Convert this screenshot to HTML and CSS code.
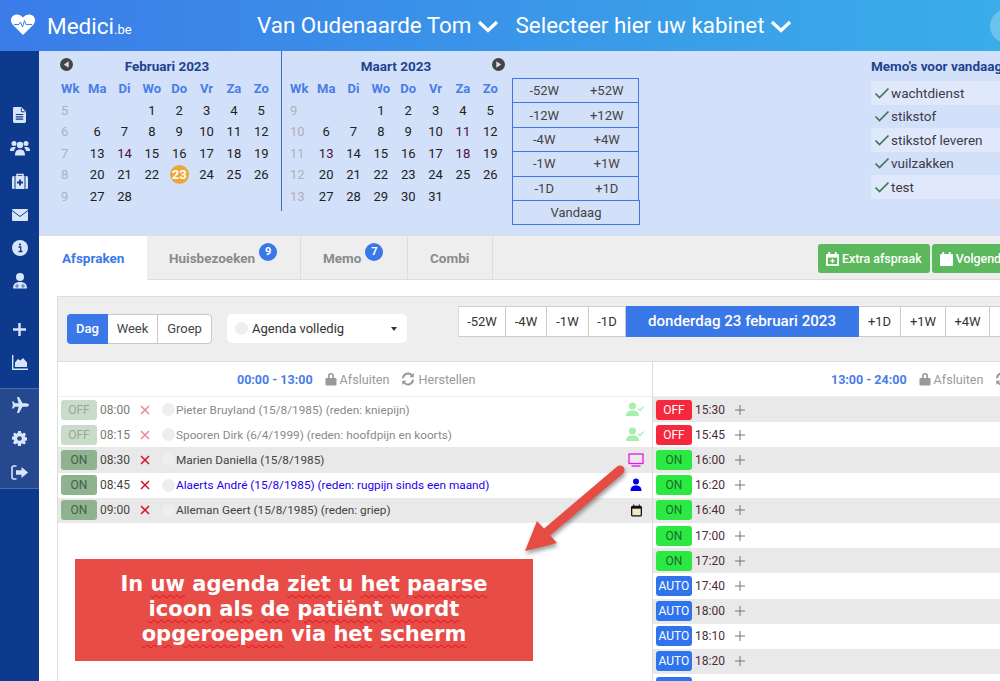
FILE: index.html
```html
<!DOCTYPE html>
<html lang="nl">
<head>
    <meta charset="UTF-8">
    <meta name="viewport" content="width=device-width, initial-scale=1.0">
    <title>Medici.be agenda</title>
    <link rel="stylesheet" href="styles.css">
</head>
<body>

    <svg class="defs" width="0" height="0">
        <symbol id="i-check" viewBox="0 0 16 16"><path d="M1.500 8.500l4 4L14.500 3.500" fill="none" stroke="currentColor" stroke-width="1.700"/></symbol>
        <symbol id="i-chevron" viewBox="0 0 22 14"><path d="M2 3l9 8.500L20 3" fill="none" stroke="currentColor" stroke-width="3.200"/></symbol>
        <symbol id="i-cross" viewBox="0 0 10 10"><path d="M1 1l8 8M9 1l-8 8" fill="none" stroke="currentColor" stroke-width="1.500"/></symbol>
        <symbol id="i-plus" viewBox="0 0 10 10"><path d="M5 0v10M0 5h10" fill="none" stroke="currentColor" stroke-width="1"/></symbol>
        <symbol id="i-lock" viewBox="0 0 12 14"><path d="M3 6V4a3 3 0 0 1 6 0v2H7.400V4a1.400 1.400 0 0 0-2.800 0v2z" fill="currentColor"/><rect x=".5" y="6" width="11" height="7.500" rx="1.200" fill="currentColor"/></symbol>
        <symbol id="i-refresh" viewBox="0 0 14 14"><path d="M2 6.200A5 5 0 0 1 11 3.500M12 7.800A5 5 0 0 1 3 10.500" fill="none" stroke="currentColor" stroke-width="2"/><path d="M12.800 1v4.300H8.500zM1.200 13V8.700h4.300z" fill="currentColor"/></symbol>
        <symbol id="i-usercheck" viewBox="0 0 18 15"><circle cx="6.500" cy="4" r="3.500" fill="currentColor"/><path d="M0 14c0-4 2.500-5.500 6.500-5.500S13 10 13 14z" fill="currentColor"/><path d="M12 6.500l2 2 3.500-4" fill="none" stroke="currentColor" stroke-width="1.300"/></symbol>
    </svg>

    <header class="topbar">
        <svg class="logo-heart" viewBox="0 0 24 21" width="24" height="21">
            <path d="M12 21L2 11C-1 8-.5 3.500 2.500 1.500 5.500-.5 9.500.5 12 3.500 14.500.5 18.500-.5 21.500 1.500 24.500 3.500 25 8 22 11z" fill="#fff"/>
            <path d="M3 10.500h5l1.500-2.500 2 5 2-6.500 1.500 4h6" fill="none" stroke="#3b7fe8" stroke-width="1"/>
        </svg>
        <div class="logo-text">Medici<small>.be</small></div>
        <div class="top-select">Van Oudenaarde Tom<svg width="22" height="14"><use href="#i-chevron"/></svg></div>
        <div class="top-select">Selecteer hier uw kabinet<svg width="22" height="14"><use href="#i-chevron"/></svg></div>
        <div class="avatar"></div>
    </header>

    <div class="shell">
        <nav class="sidebar">
            <div class="side-group">
                <a class="side-icon"><svg viewBox="0 0 14 17" width="13" height="16"><path d="M1.500 0H9l5 5v10.500a1.500 1.500 0 0 1-1.500 1.500h-11A1.500 1.500 0 0 1 0 15.500v-14A1.500 1.500 0 0 1 1.500 0z" fill="currentColor"/><path d="M3 8h8M3 10.500h8M3 13h8" stroke="#0d3a8c" stroke-width="1.200"/><path d="M9 1v4h4" fill="none" stroke="#0d3a8c"/></svg></a>
                <a class="side-icon"><svg viewBox="0 0 20 16" width="20" height="16" fill="currentColor"><circle cx="4" cy="3.500" r="2.500"/><circle cx="16" cy="3.500" r="2.500"/><circle cx="10" cy="5" r="3.200"/><path d="M0 10.500C0 8 1.500 7 4 7c1 0 1.500.3 2 .7C4.700 8.500 4 9.800 4 11H0zM20 10.500C20 8 18.500 7 16 7c-1 0-1.500.3-2 .7 1.300.8 2 2.100 2 3.300h4zM5 15.500c0-4 1.500-6 5-6s5 2 5 6z"/></svg></a>
                <a class="side-icon"><svg viewBox="0 0 16 16" width="16" height="16"><path d="M5 3V1.500h6V3" fill="none" stroke="currentColor" stroke-width="1.500"/><rect x="0" y="3" width="16" height="13" rx="1.500" fill="currentColor"/><path d="M3 3v13M13 3v13" stroke="#0d3a8c"/><path d="M8 6.500v6M5 9.500h6" stroke="#0d3a8c" stroke-width="1.800"/></svg></a>
                <a class="side-icon"><svg viewBox="0 0 16 12" width="16" height="12"><rect width="16" height="12" rx="1" fill="currentColor"/><path d="M0 1.500L8 7.500l8-6" fill="none" stroke="#0d3a8c"/></svg></a>
                <a class="side-icon"><svg viewBox="0 0 16 16" width="16" height="16"><circle cx="8" cy="8" r="8" fill="currentColor"/><path d="M6.500 7h2.200v4.500M6.500 11.500h4" fill="none" stroke="#0d3a8c" stroke-width="1.300"/><circle cx="8" cy="4.500" r="1.100" fill="#0d3a8c"/></svg></a>
                <a class="side-icon"><svg viewBox="0 0 14 16" width="14" height="16"><circle cx="7" cy="4" r="4" fill="currentColor"/><path d="M0 15.500c0-4.500 2.500-6.500 7-6.500s7 2 7 6.500z" fill="currentColor"/><circle cx="4" cy="13" r="1.200" fill="none" stroke="#0d3a8c" stroke-width=".7"/><circle cx="10" cy="13" r="1.200" fill="none" stroke="#0d3a8c" stroke-width=".7"/></svg></a>
            </div>
            <div class="side-group second">
                <a class="side-icon"><svg viewBox="0 0 14 14" width="13" height="13"><path d="M7 0v14M0 7h14" stroke="currentColor" stroke-width="2.600"/></svg></a>
                <a class="side-icon"><svg viewBox="0 0 16 15" width="16" height="15"><path d="M.7 0v14.300H16" fill="none" stroke="currentColor" stroke-width="1.400"/><path d="M3 12V7.500L6 4l2.500 1.500L11 3l4 4.500V12z" fill="currentColor"/></svg></a>
            </div>
            <div class="side-extra">
                <a class="side-icon"><svg viewBox="0 0 18 16" width="18" height="16"><path d="M18 8c0 1-1.500 1.800-3 1.800h-3.500L8 16H6l1.700-6.200H4L2.500 11.500H1L2 8 1 4.500h1.500L4 6.200h3.700L6 0h2l3.500 6.200H15c1.500 0 3 .8 3 1.800z" fill="currentColor"/></svg></a>
                <a class="side-icon"><svg viewBox="0 0 16 16" width="15" height="15"><path d="M6.500 0h3l.4 2.200 1.300.6L13 1.500 15 3.600l-1.300 1.800.5 1.300 1.800.3v3l-1.800.4-.5 1.300L15 12.400 13 14.500l-1.800-1.300-1.300.5L9.500 16h-3l-.4-2.300-1.300-.5L3 14.500 1 12.400l1.300-1.800-.5-1.300L0 9V6l1.800-.3.500-1.300L1 3.600 3 1.500l1.800 1.300 1.300-.6z" fill="currentColor"/><circle cx="8" cy="8" r="2.500" fill="#26488f"/></svg></a>
                <a class="side-icon"><svg viewBox="0 0 17 15" width="17" height="15"><path d="M5.500 1H3a2 2 0 0 0-2 2v9a2 2 0 0 0 2 2h2.500" fill="none" stroke="currentColor" stroke-width="1.600"/><path d="M17 7.500L10.500 2v3.300H5v4.400h5.500V13z" fill="currentColor"/></svg></a>
            </div>
        </nav>

        <div class="content">
            <section class="panel">
                <div class="cal first">
                    <div class="cal-title">
                        <span class="cal-arrow"><svg viewBox="0 0 12 12" width="13" height="13"><circle cx="6" cy="6" r="6" fill="#444"/><path d="M8 3v6L3.500 6z" fill="#ddd"/></svg></span>
                        <span>Februari 2023</span>
                        <span></span>
                    </div>
                    <div class="cal-grid">
                        <b>Wk</b><b>Ma</b><b>Di</b><b>Wo</b><b>Do</b><b>Vr</b><b>Za</b><b>Zo</b>
                        <i>5</i><span></span><span></span><span>1</span><span>2</span><span>3</span><span>4</span><span>5</span>
                        <i>6</i><span>6</span><span>7</span><span>8</span><span>9</span><span>10</span><span>11</span><span>12</span>
                        <i>7</i><span>13</span><span class="plum">14</span><span>15</span><span>16</span><span>17</span><span>18</span><span>19</span>
                        <i>8</i><span>20</span><span>21</span><span>22</span><span class="today"><em>23</em></span><span>24</span><span>25</span><span>26</span>
                        <i>9</i><span>27</span><span>28</span><span></span><span></span><span></span><span></span><span></span>
                    </div>
                </div>
                <div class="cal">
                    <div class="cal-title">
                        <span></span>
                        <span>Maart 2023</span>
                        <span class="cal-arrow next"><svg viewBox="0 0 12 12" width="13" height="13"><circle cx="6" cy="6" r="6" fill="#444"/><path d="M4 3v6l4.500-3z" fill="#ddd"/></svg></span>
                    </div>
                    <div class="cal-grid">
                        <b>Wk</b><b>Ma</b><b>Di</b><b>Wo</b><b>Do</b><b>Vr</b><b>Za</b><b>Zo</b>
                        <i>9</i><span></span><span></span><span>1</span><span>2</span><span>3</span><span>4</span><span>5</span>
                        <i>10</i><span>6</span><span>7</span><span>8</span><span>9</span><span>10</span><span class="plum">11</span><span>12</span>
                        <i>11</i><span class="plum">13</span><span>14</span><span>15</span><span>16</span><span>17</span><span class="plum">18</span><span>19</span>
                        <i>12</i><span>20</span><span>21</span><span>22</span><span>23</span><span>24</span><span>25</span><span>26</span>
                        <i>13</i><span>27</span><span>28</span><span>29</span><span>30</span><span>31</span><span></span><span></span>
                    </div>
                </div>
                <div class="jump">
                    <div class="jump-row"><span>-52W</span><span>+52W</span></div>
                    <div class="jump-row"><span>-12W</span><span>+12W</span></div>
                    <div class="jump-row"><span>-4W</span><span>+4W</span></div>
                    <div class="jump-row"><span>-1W</span><span>+1W</span></div>
                    <div class="jump-row"><span>-1D</span><span>+1D</span></div>
                    <div class="jump-today">Vandaag</div>
                </div>
                <div class="memos">
                    <h4>Memo's voor vandaag</h4>
                    <div class="memo odd"><svg width="16" height="16"><use href="#i-check"/></svg>wachtdienst</div>
                    <div class="memo"><svg width="16" height="16"><use href="#i-check"/></svg>stikstof</div>
                    <div class="memo odd"><svg width="16" height="16"><use href="#i-check"/></svg>stikstof leveren</div>
                    <div class="memo"><svg width="16" height="16"><use href="#i-check"/></svg>vuilzakken</div>
                    <div class="memo odd"><svg width="16" height="16"><use href="#i-check"/></svg>test</div>
                </div>
            </section>

            <div class="tabs">
                <a class="tab active">Afspraken</a>
                <a class="tab huis">Huisbezoeken<span class="count">9</span></a>
                <a class="tab memo-tab">Memo<span class="count">7</span></a>
                <a class="tab combi">Combi</a>
                <button class="green first"><svg viewBox="0 0 14 15" width="13" height="14"><path d="M3.500 0v3M10.500 0v3" stroke="currentColor" stroke-width="2"/><path d="M0 3.500a1.500 1.500 0 0 1 1.500-1.500h11A1.500 1.500 0 0 1 14 3.500V14a1 1 0 0 1-1 1H1a1 1 0 0 1-1-1z" fill="currentColor"/><rect x="2" y="6" width="10" height="7" fill="#5cb85c"/><path d="M7 7.200v4.600M4.700 9.500h4.600" stroke="#fff" stroke-width="1.500"/></svg>Extra afspraak</button>
                <button class="green"><svg viewBox="0 0 14 15" width="13" height="14"><path d="M3.500 0v3M10.500 0v3" stroke="currentColor" stroke-width="2"/><path d="M0 3.500a1.500 1.500 0 0 1 1.500-1.500h11A1.500 1.500 0 0 1 14 3.500V14a1 1 0 0 1-1 1H1a1 1 0 0 1-1-1z" fill="currentColor"/></svg>Volgende afspraak</button>
            </div>

            <main class="main">
                <div class="agenda">
                    <div class="toolbar">
                        <div class="view-switch">
                            <a class="active">Dag</a><a class="week">Week</a><a class="groep">Groep</a>
                        </div>
                        <div class="agenda-select"><span class="dot"></span>Agenda volledig<span class="caret"></span></div>
                        <div class="date-nav">
                            <a class="w48">-52W</a><a class="w40">-4W</a><a class="w41">-1W</a><a class="w36">-1D</a><a class="date">donderdag 23 februari 2023</a><a class="w41">+1D</a><a class="w44">+1W</a><a class="w43">+4W</a><a class="w60">+52W</a>
                        </div>
                    </div>
                    <div class="columns">
                        <div class="col left">
                            <div class="col-head">
                                <strong>00:00 - 13:00</strong>
                                <span><svg width="12" height="14"><use href="#i-lock"/></svg>Afsluiten</span>
                                <span><svg width="14" height="14"><use href="#i-refresh"/></svg>Herstellen</span>
                            </div>
                            <div class="row faded">
                                <span class="badge off-dim">OFF</span><span class="time">08:00</span><svg class="cross" width="10" height="10"><use href="#i-cross"/></svg><span class="dot"></span>
                                <span class="who">Pieter Bruyland (15/8/1985) (reden: kniepijn)</span>
                                <svg class="state check" width="18" height="15"><use href="#i-usercheck"/></svg>
                            </div>
                            <div class="row faded">
                                <span class="badge off-dim">OFF</span><span class="time">08:15</span><svg class="cross" width="10" height="10"><use href="#i-cross"/></svg><span class="dot"></span>
                                <span class="who">Spooren Dirk (6/4/1999) (reden: hoofdpijn en koorts)</span>
                                <svg class="state check" width="18" height="15"><use href="#i-usercheck"/></svg>
                            </div>
                            <div class="row grey">
                                <span class="badge on-dim">ON</span><span class="time">08:30</span><svg class="cross" width="10" height="10"><use href="#i-cross"/></svg><span class="dot"></span>
                                <span class="who">Marien Daniella (15/8/1985)</span>
                                <svg class="state screen" viewBox="0 0 16 14" width="16" height="14"><rect x="1" y="1" width="14" height="9.500" fill="none" stroke="currentColor" stroke-width="1.300"/><path d="M3.500 13h9" stroke="currentColor" stroke-width="1.300"/></svg>
                            </div>
                            <div class="row called">
                                <span class="badge on-dim">ON</span><span class="time">08:45</span><svg class="cross" width="10" height="10"><use href="#i-cross"/></svg><span class="dot"></span>
                                <span class="who">Alaerts André (15/8/1985) (reden: rugpijn sinds een maand)</span>
                                <svg class="state person" viewBox="0 0 12 14" width="12" height="14"><circle cx="6" cy="3.500" r="3" fill="currentColor"/><path d="M.5 13c0-4 2-5.500 5.500-5.500s5.500 1.500 5.500 5.500z" fill="currentColor"/></svg>
                            </div>
                            <div class="row grey">
                                <span class="badge on-dim">ON</span><span class="time">09:00</span><svg class="cross" width="10" height="10"><use href="#i-cross"/></svg><span class="dot"></span>
                                <span class="who">Alleman Geert (15/8/1985) (reden: griep)</span>
                                <svg class="state cal-icon" viewBox="0 0 12 13" width="11" height="13"><path d="M3 0v2.500M9 0v2.500" stroke="currentColor" stroke-width="1.200"/><rect x=".7" y="2" width="10.600" height="10.300" rx="1" fill="#f3e6c8" stroke="currentColor" stroke-width="1.400"/><path d="M1 3.500h10" stroke="currentColor" stroke-width="2"/></svg>
                            </div>
                        </div>
                        <div class="col right">
                            <div class="col-head">
                                <strong>13:00 - 24:00</strong>
                                <span><svg width="12" height="14"><use href="#i-lock"/></svg>Afsluiten</span>
                                <span><svg width="14" height="14"><use href="#i-refresh"/></svg>Herstellen</span>
                            </div>
                            <div class="row grey"><span class="badge off">OFF</span><span class="time">15:30</span><svg class="plus" width="10" height="10"><use href="#i-plus"/></svg></div>
                            <div class="row"><span class="badge off">OFF</span><span class="time">15:45</span><svg class="plus" width="10" height="10"><use href="#i-plus"/></svg></div>
                            <div class="row grey"><span class="badge on">ON</span><span class="time">16:00</span><svg class="plus" width="10" height="10"><use href="#i-plus"/></svg></div>
                            <div class="row"><span class="badge on">ON</span><span class="time">16:20</span><svg class="plus" width="10" height="10"><use href="#i-plus"/></svg></div>
                            <div class="row grey"><span class="badge on">ON</span><span class="time">16:40</span><svg class="plus" width="10" height="10"><use href="#i-plus"/></svg></div>
                            <div class="row"><span class="badge on">ON</span><span class="time">17:00</span><svg class="plus" width="10" height="10"><use href="#i-plus"/></svg></div>
                            <div class="row grey"><span class="badge on">ON</span><span class="time">17:20</span><svg class="plus" width="10" height="10"><use href="#i-plus"/></svg></div>
                            <div class="row"><span class="badge auto">AUTO</span><span class="time">17:40</span><svg class="plus" width="10" height="10"><use href="#i-plus"/></svg></div>
                            <div class="row grey"><span class="badge auto">AUTO</span><span class="time">18:00</span><svg class="plus" width="10" height="10"><use href="#i-plus"/></svg></div>
                            <div class="row"><span class="badge auto">AUTO</span><span class="time">18:10</span><svg class="plus" width="10" height="10"><use href="#i-plus"/></svg></div>
                            <div class="row grey"><span class="badge auto">AUTO</span><span class="time">18:20</span><svg class="plus" width="10" height="10"><use href="#i-plus"/></svg></div>
                            <div class="row"><span class="badge auto"></span></div>
                        </div>
                    </div>
                </div>
            </main>
        </div>
    </div>

    <!-- annotation on top of the screenshot -->
    <svg class="arrow" viewBox="0 0 130 100" width="130" height="100">
        <path d="M106 9L33 71" stroke="#e74c44" stroke-width="9" stroke-linecap="round"/>
        <path d="M11 90L23 60 43 82z" fill="#e74c44"/>
    </svg>
    <div class="callout">
        In <u>uw</u> agenda <u>ziet</u> u <u>het</u> <u>paarse</u><br>
        <u>icoon</u> <u>als</u> <u>de</u> <u>patiënt</u> <u>wordt</u><br>
        <u>opgeroepen</u> via <u>het</u> <u>scherm</u>
    </div>

</body>
</html>
```

FILE: styles.css
```css
* {
    box-sizing: border-box;
}

html, body {
    margin: 0;
    height: 681px;
    overflow: hidden;
}

body {
    position: relative;
    font-family: Roboto, "Liberation Sans", sans-serif;
    font-size: 12px;
    color: #333;
    background-color: white;
}

.defs {
    position: absolute;
}

/* top bar */
.topbar {
    height: 51px;
    display: flex;
    align-items: center;
    padding-left: 11px;
    color: white;
    background: linear-gradient(90deg, #3b7ce8, #39aee9);
}

.logo-heart {
    flex-shrink: 0;
    margin-bottom: 2px;
}

.logo-text {
    flex-shrink: 0;
    margin-left: 12px;
    width: 210px;
    font-size: 22.5px;
    font-weight: 400;
}

.logo-text small {
    font-size: 13px;
    font-weight: 400;
}

.top-select {
    display: flex;
    flex-shrink: 0;
    align-items: center;
    gap: 5px;
    padding-bottom: 2px;
    font-size: 22.4px;
    margin-right: 17px;
    white-space: pre;
}

.top-select svg {
    margin-top: 3px;
}

.avatar {
    width: 34px;
    height: 34px;
    flex-shrink: 0;
    margin-left: auto;
    margin-right: -24px;
    border-radius: 50%;
    background-color: rgba(255, 255, 255, 0.25);
}

/* sidebar */
.shell {
    display: flex;
    height: 630px;
}

.sidebar {
    width: 39px;
    flex-shrink: 0;
    padding-top: 47px;
    color: #d8e5fb;
    background-color: #0d3a8c;
}

.side-group.second {
    margin-top: 15px;
    height: 75px;
}

.side-extra {
    background-color: #26488f;
    border-top: 1px solid #4d6ca8;
    border-bottom: 1px solid #4d6ca8;
    height: 101px;
}

.side-icon {
    display: flex;
    height: 33.3px;
    align-items: center;
    justify-content: center;
}

/* calendars panel */
.content {
    width: 961px;
    overflow: hidden;
}

.panel {
    height: 185px;
    display: flex;
    align-items: flex-start;
    padding-left: 18px;
    background-color: #d2e0f9;
    border-bottom: 1px solid #dcdcdc;
}

.cal {
    width: 225px;
    flex-shrink: 0;
    padding-left: 4px;
    height: 160px;
}

.cal.first {
    width: 225px;
    padding-left: 0;
    border-right: 1px solid #3b6fc9;
}

.cal-title {
    display: grid;
    grid-template-columns: 1fr auto 1fr;
    width: 220px;
    height: 27px;
    padding-top: 7px;
    line-height: 16px;
    font-size: 13.5px;
    font-weight: 700;
    color: #1f4390;
}

.cal-arrow {
    padding-left: 3px;
}

.cal-arrow.next {
    justify-self: end;
    padding: 0 1px 0 0;
}

.cal-grid {
    display: grid;
    width: 220px;
    grid-template-columns: 26.5px repeat(7, 27.35px);
    grid-auto-rows: 21.5px;
    align-items: center;
    text-align: center;
    font-size: 13px;
    color: #222;
}

.cal-grid b {
    color: #4a7de8;
    font-weight: 700;
}

.cal-grid i {
    font-style: normal;
    color: #b0b0b8;
    text-align: left;
    padding-left: 4px;
}

.cal-grid .plum {
    color: #4a1040;
}

.today em {
    display: block;
    width: 19px;
    height: 19px;
    margin: 0 auto;
    line-height: 19px;
    font-style: normal;
    font-weight: 700;
    color: white;
    border-radius: 50%;
    background-color: #eea63a;
}

.jump {
    width: 128px;
    flex-shrink: 0;
    margin: 27px 0 0 5px;
    font-size: 13px;
    color: #444;
}

.jump-row {
    display: flex;
    width: 127px;
    height: 24.4px;
    align-items: center;
    border: 1px solid #3b78e7;
    border-bottom: none;
}

.jump-row span {
    width: 63px;
    text-align: center;
}

.jump-today {
    height: 25px;
    line-height: 23px;
    text-align: center;
    border: 1px solid #3b78e7;
}

.memos {
    width: 200px;
    flex-shrink: 0;
    margin-left: 231px;
}

.memos h4 {
    margin: 7px 0 7px;
    font-size: 13.5px;
    line-height: 16px;
    font-weight: 700;
    color: #1f4390;
    white-space: nowrap;
}

.memo {
    display: flex;
    align-items: center;
    gap: 1px;
    height: 23.5px;
    padding-left: 3px;
    font-size: 13.5px;
    color: #3b3b4a;
}

.memo.odd {
    background-color: #e0e9fb;
}

.memo svg {
    color: #3c7a50;
}

/* tabs */
.tabs {
    display: flex;
    height: 44px;
    background-color: #eeeeee;
    border-bottom: 1px solid #dddddd;
    font-size: 13.5px;
    font-weight: 700;
    color: #8b8b8b;
}

.tab {
    display: flex;
    flex-shrink: 0;
    align-items: center;
    height: 43px;
    padding-left: 22px;
    border-right: 1px solid #dddddd;
}

.tab.active {
    width: 108px;
    height: 44px;
    padding-left: 23px;
    color: #3b78e7;
    background-color: white;
    border-right: none;
}

.tab.huis {
    width: 154px;
}

.tab.memo-tab {
    width: 107px;
}

.tab.combi {
    width: 85px;
}

.count {
    width: 18px;
    height: 18px;
    margin: 0 0 12px 4px;
    line-height: 18px;
    text-align: center;
    font-size: 11px;
    color: white;
    border-radius: 50%;
    background-color: #3b78e7;
}

.green {
    display: flex;
    align-items: center;
    flex-shrink: 0;
    gap: 3px;
    height: 29px;
    margin: 8px 0 0 2px;
    padding: 0 8px;
    font-family: inherit;
    font-size: 12.4px;
    font-weight: 500;
    white-space: nowrap;
    color: white;
    border: none;
    border-radius: 3px;
    background-color: #5cb85c;
}

.green.first {
    margin-left: 325px;
}

/* agenda */
.main {
    padding: 16px 0 0 18px;
}

.agenda {
    width: 1100px;
    border-left: 1px solid #dddddd;
    border-top: 1px solid #dddddd;
}

.toolbar {
    display: flex;
    align-items: flex-start;
    height: 65px;
    background-color: #eeeeee;
    border-bottom: 1px solid #dddddd;
}

.view-switch {
    display: flex;
    height: 30px;
    margin: 17px 0 0 9px;
    font-size: 13px;
    background-color: white;
    border: 1px solid #c8c8c8;
    border-radius: 4px;
}

.view-switch a {
    line-height: 28px;
    text-align: center;
    color: #444;
}

.view-switch .active {
    width: 41px;
    margin: -1px 0 -1px -1px;
    line-height: 30px;
    font-weight: 500;
    color: white;
    background-color: #3b78e7;
    border-radius: 4px 0 0 4px;
}

.view-switch .week {
    width: 50px;
    border-right: 1px solid #c8c8c8;
}

.view-switch .groep {
    width: 53px;
}

.agenda-select {
    display: flex;
    align-items: center;
    gap: 4px;
    position: relative;
    width: 180px;
    height: 29px;
    margin: 17px 0 0 15px;
    padding-left: 8px;
    font-size: 13px;
    color: #333;
    background-color: white;
    border-radius: 5px;
}

.caret {
    position: absolute;
    right: 10px;
    top: 13px;
    border-top: 4px solid #333;
    border-left: 3px solid transparent;
    border-right: 3px solid transparent;
}

.dot {
    display: inline-block;
    width: 13px;
    height: 13px;
    flex-shrink: 0;
    border-radius: 50%;
    background-color: #eeeeee;
}

.date-nav {
    display: flex;
    flex-shrink: 0;
    margin: 9px 0 0 51px;
    height: 31px;
    font-size: 13px;
    color: #333;
}

.date-nav a {
    flex-shrink: 0;
    line-height: 29px;
    text-align: center;
    background-color: white;
    border: 1px solid #cccccc;
    border-left: none;
}

.date-nav a:first-child {
    border-left: 1px solid #dddddd;
}

.date-nav .w36 { width: 37px; }
.date-nav .w40 { width: 41px; }
.date-nav .w41 { width: 42px; }
.date-nav .w43 { width: 44px; }
.date-nav .w44 { width: 45px; }
.date-nav .w48 { width: 48px; }
.date-nav .w60 { width: 60px; }

.date-nav .date {
    width: 233px;
    font-size: 15.1px;
    font-weight: 500;
    color: white;
    border-color: #3b78e7;
    background-color: #3b78e7;
}

.columns {
    display: flex;
}

.col.left {
    width: 595px;
    flex-shrink: 0;
    border-right: 1px solid #dddddd;
}

.col.right {
    flex: 1;
}

.col-head {
    display: flex;
    align-items: center;
    gap: 12px;
    height: 35px;
    padding-left: 179px;
    font-size: 12.6px;
    color: #999999;
    border-bottom: 1px solid #eeeeee;
}

.col.right .col-head {
    padding-left: 178px;
}

.col-head strong {
    color: #4a7de8;
    font-size: 12.5px;
    font-weight: 700;
}

.col-head span {
    display: flex;
    align-items: center;
    gap: 3px;
}

.row {
    display: flex;
    align-items: center;
    height: 25.2px;
    padding-left: 3px;
    color: #444;
}

.col.right .row {
    color: #4a2c40;
}

.row.grey {
    background-color: #e9e9e9;
}

.badge {
    width: 36px;
    height: 20px;
    flex-shrink: 0;
    line-height: 20px;
    text-align: center;
    border-radius: 3px;
}

.off-dim {
    color: #9aa69a;
    background-color: #c9dcc9;
}

.on-dim {
    color: #44604a;
    background-color: #8fb28f;
}

.off {
    color: white;
    background-color: #f5283c;
}

.on {
    color: #1f6b2e;
    background-color: #2ce843;
}

.auto {
    color: white;
    background-color: #2f74ec;
}

.time {
    margin-left: 3px;
    width: 40px;
    flex-shrink: 0;
}

.cross {
    color: #d8101f;
}

.plus {
    color: #777;
}

.row .dot {
    margin-left: 12px;
}

.who {
    margin-left: 1px;
    font-size: 11.8px;
    white-space: nowrap;
}

.state {
    margin-left: auto;
    flex-shrink: 0;
    margin-right: 8px;
}

.faded {
    color: #8a8a8a;
}

.faded .time {
    color: #7a7a7a;
}

.faded .cross {
    color: #e88a92;
}

.check {
    color: #a4f0ac;
}

.screen {
    color: #ee10ee;
}

.person {
    margin-right: 10px;
    color: #0000ee;
}

.cal-icon {
    margin-right: 10px;
    color: #111;
}

.called .who {
    color: #2200ee;
}

/* annotation */
.arrow {
    position: absolute;
    left: 514px;
    top: 461px;
    filter: drop-shadow(1px 3px 2px rgba(0, 0, 0, 0.4));
}

.callout {
    position: absolute;
    left: 75px;
    top: 559px;
    width: 458px;
    height: 102px;
    padding-top: 13px;
    text-align: center;
    font-family: "DejaVu Sans", Verdana, sans-serif;
    font-size: 21px;
    line-height: 25px;
    font-weight: 700;
    color: white;
    background-color: #e84c47;
}

.callout u {
    text-decoration: underline wavy #e01020 1px;
    text-underline-offset: 3px;
}
```
